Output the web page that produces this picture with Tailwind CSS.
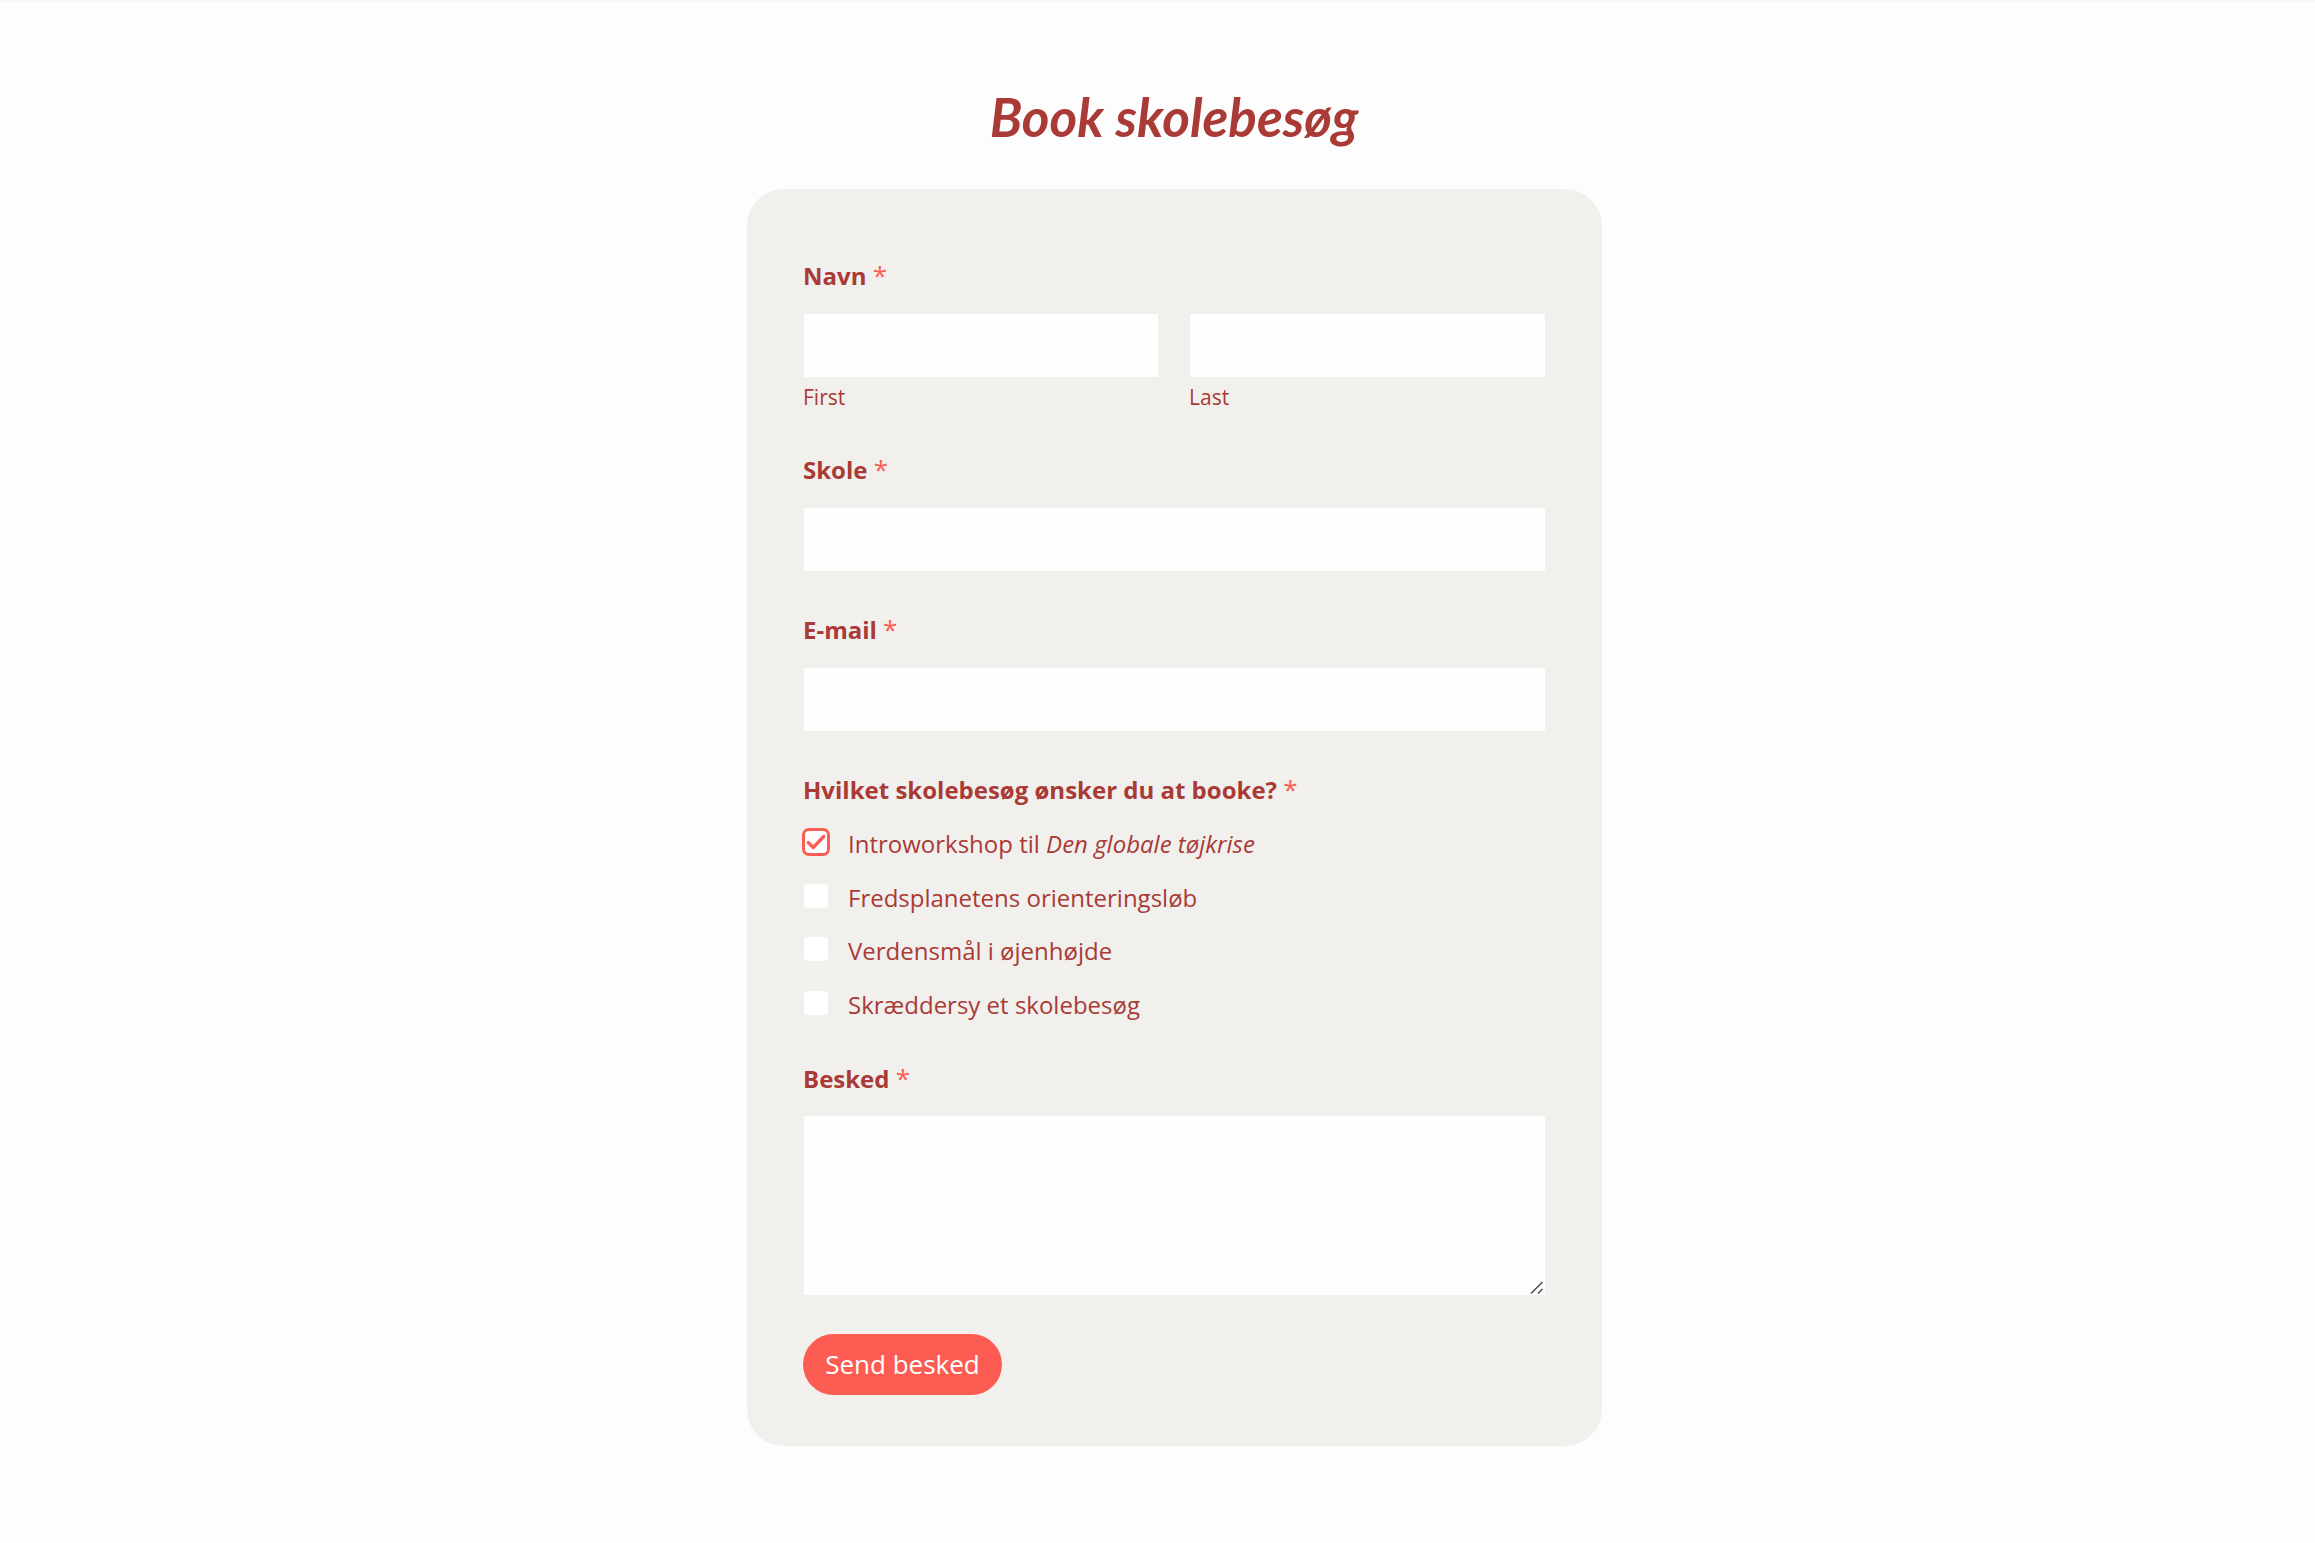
<!DOCTYPE html>
<html lang="da">
<head>
    <meta charset="UTF-8">
    <title>Book skolebesøg</title>
    <script src="https://cdn.jsdelivr.net/npm/@tailwindcss/browser@4"></script>
</head>
<body class="bg-[#fdfdfd] font-['Open_Sans',sans-serif] text-[#a93a36] border-t-2 border-[#f6f6f6] min-h-[1543px]">
    <h1 class="mt-[82px] h-[67px] text-center text-[53px] leading-[65px] font-bold italic pl-[33px] font-['Lato',sans-serif]">Book skolebesøg</h1>
    <div class="ml-[747px] mt-[38px] w-[855px] h-[1257px] rounded-[37px] bg-[#f2f0ed] px-[57px] pt-[71px]">
        <form>
            <!-- Navn -->
            <div class="mb-[43px]">
                <label class="block -ml-[1px] text-[24px] leading-[32px] font-bold mb-[22px]">Navn <span class="font-normal text-[26px] leading-none text-[#fc5c52]">*</span></label>
                <div class="grid grid-cols-[354px_1fr] gap-[32px]">
                    <div>
                        <input type="text" class="block w-full h-[63px] bg-[#fefefe] outline-none">
                        <span class="block -ml-[1px] mt-[6px] text-[21px] leading-[28px]">First</span>
                    </div>
                    <div>
                        <input type="text" class="block w-full h-[63px] bg-[#fefefe] outline-none">
                        <span class="block -ml-[1px] mt-[6px] text-[21px] leading-[28px]">Last</span>
                    </div>
                </div>
            </div>

            <div class="mb-[43px]">
                <label class="block -ml-[1px] text-[24px] leading-[32px] font-bold mb-[22px]">Skole <span class="font-normal text-[26px] leading-none text-[#fc5c52]">*</span></label>
                <input type="text" class="block w-full h-[63px] bg-[#fefefe] outline-none">
            </div>

            <div class="mb-[42px]">
                <label class="block -ml-[1px] text-[24px] leading-[32px] font-bold mb-[22px]">E-mail <span class="font-normal text-[26px] leading-none text-[#fc5c52]">*</span></label>
                <input type="email" class="block w-full h-[63px] bg-[#fefefe] outline-none">
            </div>

            <!-- Skolebesøg -->
            <div class="mb-[30px]">
                <label class="block -ml-[1px] text-[24px] leading-[33px] font-bold mb-[11px]">Hvilket skolebesøg ønsker du at booke? <span class="font-normal text-[26px] leading-none text-[#fc5c52]">*</span></label>
                <div class="flex flex-col">
                    <div class="flex items-center h-[53.7px] gap-[20px] text-[24px]">
                        <span class="flex items-center justify-center w-[28px] h-[28px] -mx-[2px] -mt-[4px] rounded-[7px] border-[3px] border-[#fc5c52] bg-white">
                            <svg viewBox="0 0 20 20" class="w-[22px] h-[22px]" fill="none" stroke="#fc5c52" stroke-width="3" stroke-linecap="round" stroke-linejoin="round"><path d="M3 10.5l4.5 4.5 9.5-10"/></svg>
                        </span>
                        <span>Introworkshop til <em>Den globale tøjkrise</em></span>
                    </div>
                    <div class="flex items-center h-[53.7px] gap-[20px] text-[24px]">
                        <span class="w-[24px] h-[24px] -mt-[4px] rounded-[4px] bg-white"></span>
                        <span>Fredsplanetens orienteringsløb</span>
                    </div>
                    <div class="flex items-center h-[53.7px] gap-[20px] text-[24px]">
                        <span class="w-[24px] h-[24px] -mt-[4px] rounded-[4px] bg-white"></span>
                        <span>Verdensmål i øjenhøjde</span>
                    </div>
                    <div class="flex items-center h-[53.7px] gap-[20px] text-[24px]">
                        <span class="w-[24px] h-[24px] -mt-[4px] rounded-[4px] bg-white"></span>
                        <span>Skræddersy et skolebesøg</span>
                    </div>
                </div>
            </div>

            <div class="mb-[39px]">
                <label class="block -ml-[1px] text-[24px] leading-[34px] font-bold mb-[20px]">Besked <span class="font-normal text-[26px] leading-none text-[#fc5c52]">*</span></label>
                <div class="relative">
                    <textarea class="block w-full h-[179px] bg-[#fefefe] outline-none resize-none"></textarea>
                    <!-- resize handle -->
                    <svg viewBox="0 0 13 13" class="absolute right-[2px] bottom-[1px] w-[13px] h-[13px]" fill="none" stroke="#4b4b4b" stroke-width="1.5"><path d="M1 12.5L12.5 1M8 12.5l4.5-4.5"/></svg>
                </div>
            </div>

            <button type="button" class="block -ml-[1px] h-[61px] w-[199px] rounded-full bg-[#fc5c52] text-white text-[26px] font-medium">Send besked</button>
        </form>
    </div>
</body>
</html>
